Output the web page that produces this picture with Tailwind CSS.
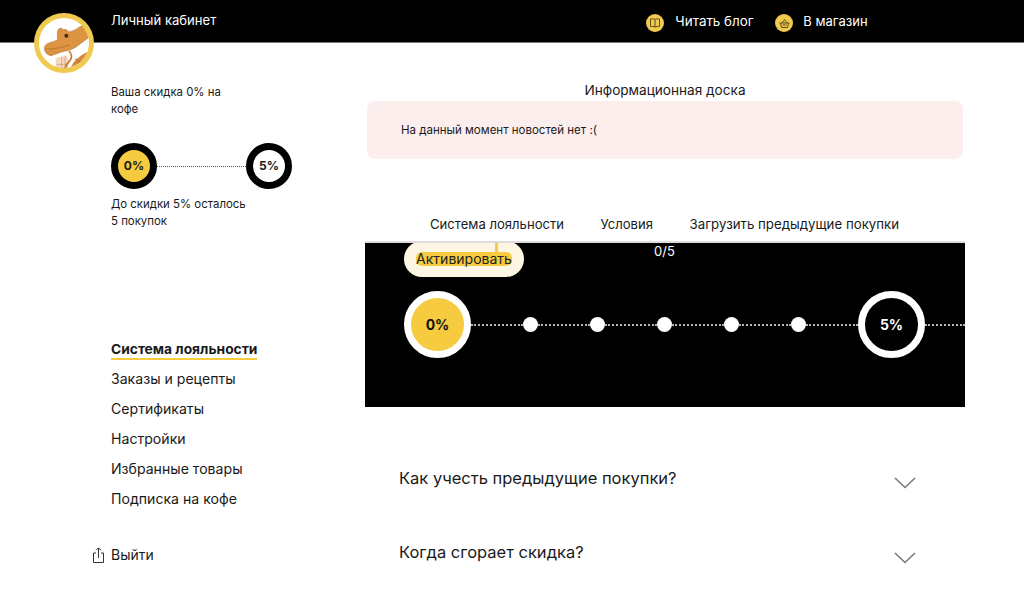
<!DOCTYPE html>
<html lang="ru">
<head>
  <meta charset="UTF-8" />
  <meta name="viewport" content="width=device-width, initial-scale=1.0"/>
  <title>Личный кабинет</title>
  <script src="https://cdn.jsdelivr.net/npm/@tailwindcss/browser@4"></script>
</head>
<body class="relative h-[597px] overflow-hidden bg-white text-[#1a1a1a] font-['Inter',sans-serif]">

  <!-- Header -->
  <header class="h-[43px] bg-black border-b border-[#777] text-white flex text-[13px]">
    <a class="ml-[111px] mt-[12px] leading-4 text-[13.1px]">Личный кабинет</a>
    <nav class="ml-[430px] mt-[13px] flex items-start">
      <span class="flex items-center w-[129px]">
        <span class="w-[18px] h-[18px] mt-[1px] rounded-full bg-[#f0c94f] flex items-center justify-center">
          <svg width="12" height="12" viewBox="0 0 12 12" fill="none" stroke="#5f4f18" stroke-width="1"><path d="M6 2.600C5 1.800 3 1.600 1.500 2v7.600c1.500-.4 3.500-.2 4.500.6 1-.8 3-1 4.500-.6V2C9 1.600 7 1.800 6 2.600zM6 2.600v7.600"/></svg>
        </span>
        <span class="ml-[11px] leading-4 -mt-[4px] text-[13.4px]">Читать блог</span>
      </span>
      <span class="flex items-center">
        <span class="w-[18px] h-[18px] mt-[1px] rounded-full bg-[#f0c94f] flex items-center justify-center">
          <svg width="13" height="13" viewBox="0 0 13 13" fill="none" stroke="#5f4f18" stroke-width="1"><path d="M1.500 6h10M2.500 6l1 4.500h6l1-4.500M4 6l2.500-3.500L9 6M4.500 8h4"/></svg>
        </span>
        <span class="ml-[10px] leading-4 -mt-[4px]">В магазин</span>
      </span>
    </nav>
  </header>

  <!-- Logo overlaps the header -->
  <div class="absolute left-[34px] top-[13px] w-[60px] h-[60px] rounded-full border-[5px] border-[#f0c94f] bg-white overflow-hidden">
    <svg class="block -m-[5px]" width="60" height="60" viewBox="27 24 180 180">
      <path d="M146 172Q168 146 200 136L210 175 175 204H128Z" fill="#d8893a"/>
      <path d="M92 160L126 150 132 170 126 204H92Z" fill="#f3d9bf"/>
      <path d="M110 156V198M120 154V198M94 178H128M94 190H128" stroke="#c99a78" stroke-width="2" fill="none"/>
      <path d="M132 138Q146 152 134 168 122 178 118 198" stroke="#c87a2c" stroke-width="5" fill="none"/>
      <path d="M58 128Q60 114 85 110L98 104Q94 74 104 70 112 68 115 74 124 70 130 80 146 80 165 65L184 58 198 92Q172 112 150 128 132 138 112 140L78 152Q58 148 58 128Z" fill="#dc9443" stroke="#a9661f" stroke-width="1.500"/>
      <path d="M64 132Q90 134 134 120" stroke="#a9661f" stroke-width="2" fill="none"/>
      <circle cx="124" cy="92" r="6" fill="#4a2a10"/>
      <path d="M150 162l8 4M158 172l6-3" stroke="#7a4a1c" stroke-width="2"/>
    </svg>
  </div>

  <div class="flex">
    <!-- Sidebar -->
    <aside class="w-[365px] pl-[111px] shrink-0 text-[11.4px]">
      <p class="mt-[41px] w-[125px] leading-[17px]">Ваша скидка 0% на кофе</p>
      <div class="mt-[25px] w-[181px] flex items-center">
        <div class="w-[46px] h-[46px] rounded-full border-[7px] border-black bg-[#f6cb3f] flex items-center justify-center text-[12px] font-bold">0%</div>
        <div class="flex-1 border-t border-dotted border-[#555]"></div>
        <div class="w-[46px] h-[46px] rounded-full border-[7px] border-black bg-white flex items-center justify-center text-[12px] font-bold">5%</div>
      </div>
      <p class="mt-[7px] w-[138px] leading-[17px]">До скидки 5% осталось 5 покупок</p>

      <nav class="mt-[111px] flex flex-col items-start gap-[12px] text-[14.1px] leading-[18px]">
        <a class="font-bold text-[13.8px] border-b-2 border-[#f6cb3f] leading-[17px] mb-[-2px]">Система лояльности</a>
        <a>Заказы и рецепты</a>
        <a>Сертификаты</a>
        <a>Настройки</a>
        <a>Избранные товары</a>
        <a>Подписка на кофе</a>
      </nav>

      <a class="mt-[38px] -ml-[18px] flex items-center gap-[7px] text-[14px] leading-[18px]">
        <svg width="11" height="16" viewBox="0 0 11 16" fill="none" stroke="#333" stroke-width="1"><path d="M3 6H.5v9.500h10V6H8M5.500 11V1M3 3.300L5.500 .8 8 3.300"/></svg>
        Выйти
      </a>
    </aside>

    <!-- Main -->
    <main class="w-[600px] shrink-0">
      <h2 class="mt-[39px] text-center text-[13.6px] leading-4">Информационная доска</h2>
      <div class="mx-[2px] mt-[3px] h-[58px] rounded-lg bg-[#fdeeee] pl-[34px] pt-[1px] flex items-center text-[11.5px]">На данный момент новостей нет :(</div>

      <div class="mt-[57px] pl-[65px] flex gap-[36.5px] text-[13.1px] leading-4">
        <a>Система лояльности</a>
        <a>Условия</a>
        <a class="text-[13.25px]">Загрузить предыдущие покупки</a>
      </div>

      <!-- Loyalty panel -->
      <section class="mt-[9px] h-[166px] bg-black border-t-2 border-[#ddd] overflow-hidden text-white">
        <div class="flex items-start pl-[39px]">
          <div class="relative w-[120px] h-[36px] -mt-[2px] rounded-[18px] bg-[#fdf6e3] flex items-center justify-center text-[14px] text-[#222]">
            <span class="absolute left-[91px] top-0 w-[3px] h-[12px] bg-[#f6cb3f]"></span>
            <span class="bg-[#f6cb3f] rounded-[6px] leading-[14px]">Активировать</span>
          </div>
          <span class="ml-[130px] text-[13px] leading-4">0/5</span>
        </div>
        <div class="mt-[14px] pl-[39px] flex items-center">
          <div class="w-[67px] h-[67px] shrink-0 rounded-full border-[7px] border-white bg-[#f6cb3f] text-[#111] flex items-center justify-center text-[14px] font-bold">0%</div>
          <div class="flex-1 border-t-2 border-dotted border-white/70"></div>
          <div class="w-[15px] h-[15px] shrink-0 rounded-full bg-white"></div>
          <div class="flex-1 border-t-2 border-dotted border-white/70"></div>
          <div class="w-[15px] h-[15px] shrink-0 rounded-full bg-white"></div>
          <div class="flex-1 border-t-2 border-dotted border-white/70"></div>
          <div class="w-[15px] h-[15px] shrink-0 rounded-full bg-white"></div>
          <div class="flex-1 border-t-2 border-dotted border-white/70"></div>
          <div class="w-[15px] h-[15px] shrink-0 rounded-full bg-white"></div>
          <div class="flex-1 border-t-2 border-dotted border-white/70"></div>
          <div class="w-[15px] h-[15px] shrink-0 rounded-full bg-white"></div>
          <div class="flex-1 border-t-2 border-dotted border-white/70"></div>
          <div class="w-[67px] h-[67px] shrink-0 rounded-full border-[7px] border-white flex items-center justify-center text-[14px] font-bold">5%</div>
          <div class="w-[40px] shrink-0 border-t-2 border-dotted border-white/70"></div>
        </div>
      </section>

      <!-- FAQ -->
      <div class="mt-[61px] pl-[34px] pr-[49px] flex justify-between items-start text-[16.5px] leading-5">
        <span>Как учесть предыдущие покупки?</span>
        <svg class="mt-[9px]" width="22" height="12" viewBox="0 0 22 12" fill="none" stroke="#777" stroke-width="1.500"><path d="M1 1l10 9.500L21 1"/></svg>
      </div>
      <div class="mt-[53px] pl-[34px] pr-[49px] flex justify-between items-start text-[16.5px] leading-5">
        <span>Когда сгорает скидка?</span>
        <svg class="mt-[10px]" width="22" height="12" viewBox="0 0 22 12" fill="none" stroke="#777" stroke-width="1.500"><path d="M1 1l10 9.500L21 1"/></svg>
      </div>
    </main>
  </div>
</body>
</html>
